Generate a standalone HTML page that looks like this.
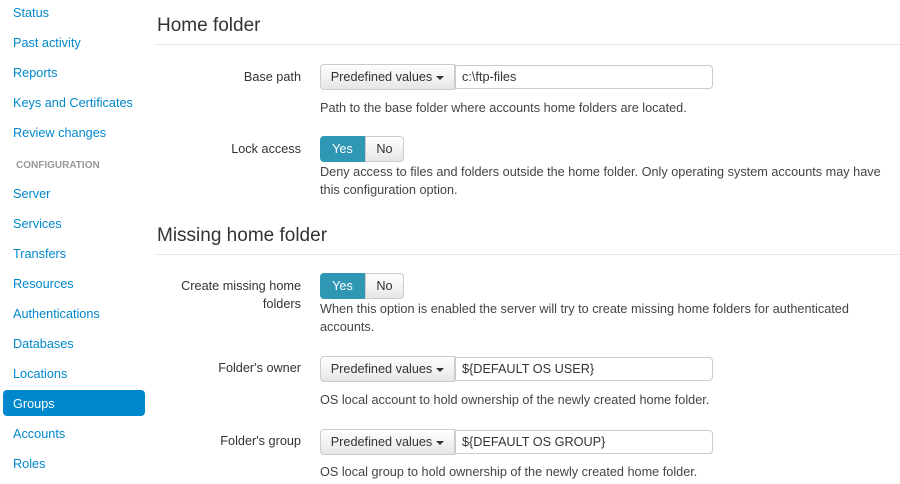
<!DOCTYPE html>
<html><head><style>
body{margin:0;width:900px;height:484px;overflow:hidden;background:#fff;font-family:"Liberation Sans",Arial,sans-serif;font-size:12.7px;color:#333;position:relative}
.a{position:absolute}
.nav{left:13px;color:#0088cc;font-size:12.7px;line-height:16px}
.act{position:absolute;left:3px;width:142px;height:26px;top:390px;background:#0088cc;border-radius:4px}
h2{position:absolute;left:157px;margin:0;font-weight:normal;font-size:19px;color:#333;line-height:22px}
.hr{position:absolute;left:155px;right:0;height:1px;background:#e5e5e5}
.lbl{position:absolute;right:599px;text-align:right;line-height:18px}
.btn{position:absolute;left:320px;width:133px;height:24px;border:1px solid #ccc;border-radius:4px 0 0 4px;background:linear-gradient(#fff,#e6e6e6);line-height:24px;text-align:center;box-sizing:content-box}
.car{display:inline-block;width:0;height:0;border-left:4px solid transparent;border-right:4px solid transparent;border-top:4px solid #333;vertical-align:middle;margin-left:4px}
.inp{position:absolute;left:455px;width:250px;height:22px;border:1px solid #ccc;border-radius:0 4px 4px 0;padding-left:6px;line-height:22px}
.help{position:absolute;left:320px;line-height:18px;color:#444}
.yes{position:absolute;left:320px;width:45px;height:26px;background:#2f96b4;color:#fff;border-radius:4px 0 0 4px;text-align:center;line-height:26px;border:0;box-sizing:border-box}
.no{position:absolute;left:365px;width:39px;height:26px;background:linear-gradient(#fff,#e6e6e6);border:1px solid #ccc;border-radius:0 4px 4px 0;text-align:center;line-height:24px;box-sizing:border-box}
</style></head><body>
<div class="act"></div>
<div class="a nav" style="top:5px">Status</div>
<div class="a nav" style="top:35px">Past activity</div>
<div class="a nav" style="top:65px">Reports</div>
<div class="a nav" style="top:95px">Keys and Certificates</div>
<div class="a nav" style="top:125px">Review changes</div>
<div class="a" style="left:16px;top:160px;font-size:10px;font-weight:bold;color:#999">CONFIGURATION</div>
<div class="a nav" style="top:186px">Server</div>
<div class="a nav" style="top:216px">Services</div>
<div class="a nav" style="top:246px">Transfers</div>
<div class="a nav" style="top:276px">Resources</div>
<div class="a nav" style="top:306px">Authentications</div>
<div class="a nav" style="top:336px">Databases</div>
<div class="a nav" style="top:366px">Locations</div>
<div class="a nav" style="top:396px;color:#fff">Groups</div>
<div class="a nav" style="top:426px">Accounts</div>
<div class="a nav" style="top:456px">Roles</div>

<h2 style="top:15px">Home folder</h2>
<div class="hr" style="top:44px"></div>
<div class="lbl" style="top:68px">Base path</div>
<div class="btn" style="top:64px">Predefined values<span class="car"></span></div>
<div class="inp" style="top:65px">c:\ftp-files</div>
<div class="help" style="top:99px">Path to the base folder where accounts home folders are located.</div>
<div class="lbl" style="top:140px">Lock access</div>
<div class="yes" style="top:136px">Yes</div><div class="no" style="top:136px">No</div>
<div class="help" style="top:163px;width:575px">Deny access to files and folders outside the home folder. Only operating system accounts may have this configuration option.</div>

<h2 style="top:225px">Missing home folder</h2>
<div class="hr" style="top:254px"></div>
<div class="lbl" style="top:277px">Create missing home<br>folders</div>
<div class="yes" style="top:273px">Yes</div><div class="no" style="top:273px">No</div>
<div class="help" style="top:300px;width:575px">When this option is enabled the server will try to create missing home folders for authenticated accounts.</div>
<div class="lbl" style="top:359px">Folder's owner</div>
<div class="btn" style="top:356px">Predefined values<span class="car"></span></div>
<div class="inp" style="top:357px">${DEFAULT OS USER}</div>
<div class="help" style="top:391px">OS local account to hold ownership of the newly created home folder.</div>
<div class="lbl" style="top:432px">Folder's group</div>
<div class="btn" style="top:429px">Predefined values<span class="car"></span></div>
<div class="inp" style="top:430px">${DEFAULT OS GROUP}</div>
<div class="help" style="top:463px">OS local group to hold ownership of the newly created home folder.</div>
</body></html>
